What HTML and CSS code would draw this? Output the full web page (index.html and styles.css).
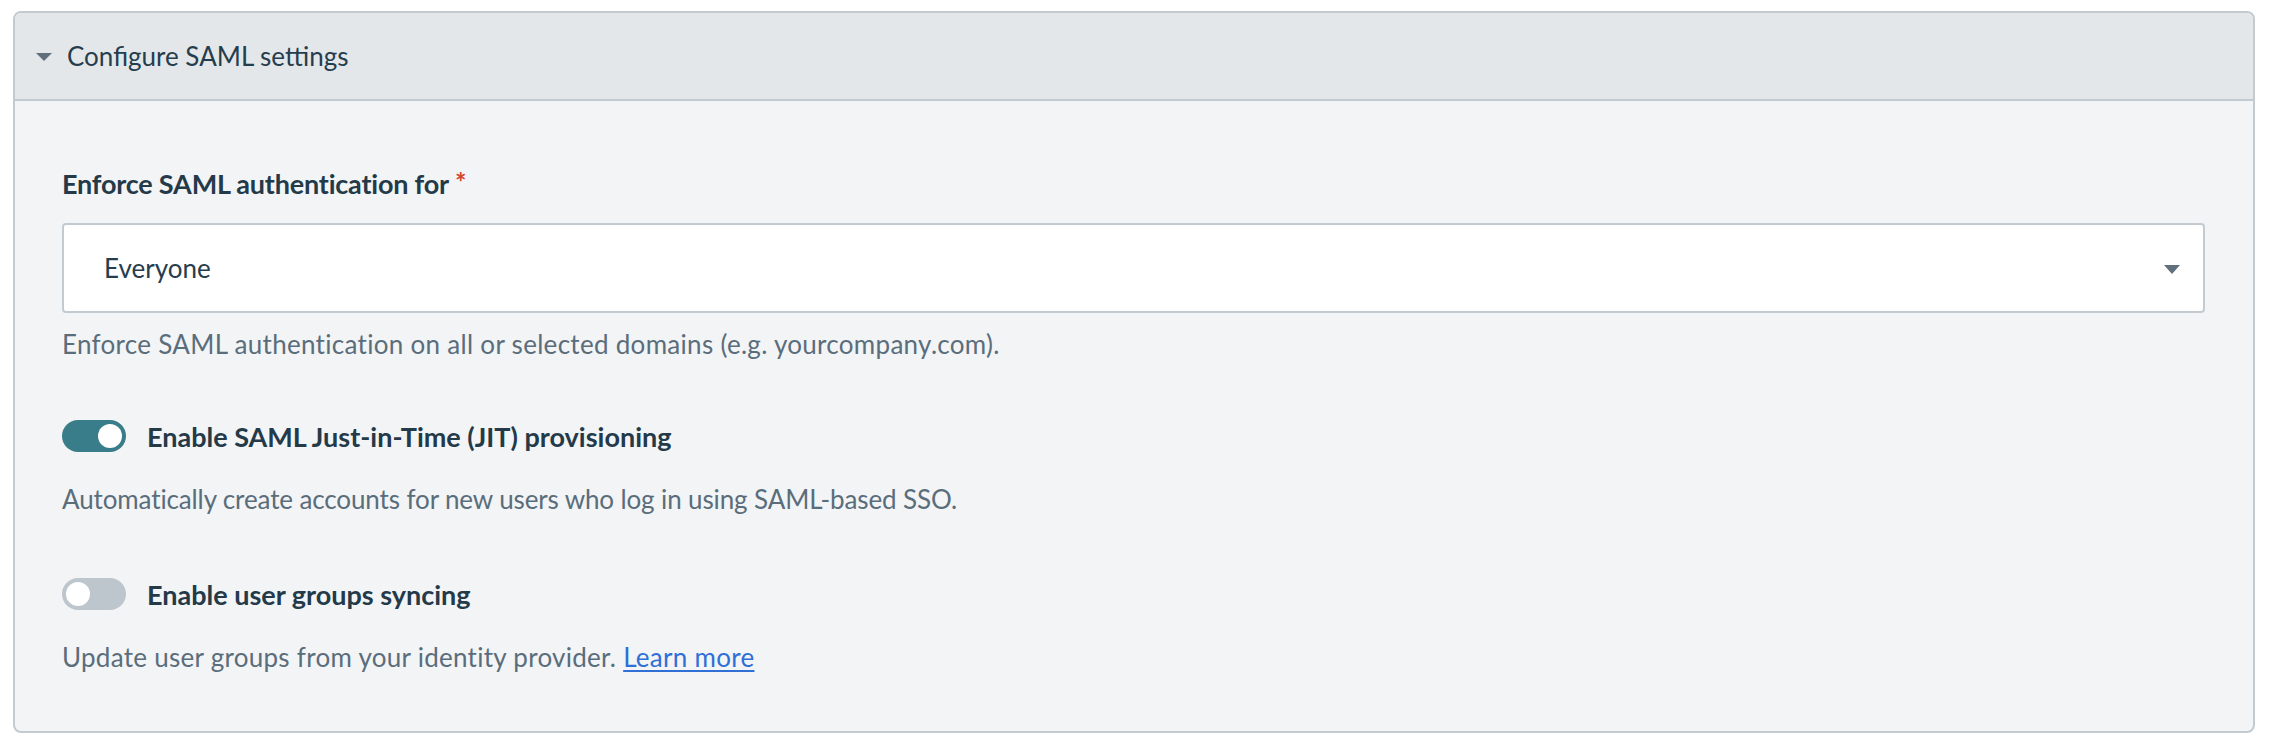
FILE: index.html
```html
<!DOCTYPE html>
<html lang="en">
<head>
<meta charset="utf-8">
<title>Configure SAML settings</title>
<link rel="stylesheet" href="styles.css">
</head>
<body>
<section class="panel">
  <header class="panel-header">
    <svg class="caret" width="16" height="8" viewBox="0 0 16 8" aria-hidden="true"><path d="M0 0 H16 L8 8 Z" fill="#5f6f7b"/></svg>
    <span class="panel-title">Configure SAML settings</span>
  </header>
  <div class="panel-body">
    <div class="group">
      <div class="field-label">Enforce SAML authentication for<span class="req">*</span></div>
      <div class="select">
        <span class="select-value">Everyone</span>
        <svg class="select-arrow" width="16" height="9" viewBox="0 0 16 9" aria-hidden="true"><path d="M0 0 H16 L8 9 Z" fill="#5f6f7b"/></svg>
      </div>
      <p class="help help-domains">Enforce SAML authentication on all or selected domains (e.g. yourcompany.com).</p>
    </div>
    <div class="group group-toggle">
      <div class="toggle-row">
        <span class="toggle on"><span class="knob"></span></span>
        <span class="toggle-label">Enable SAML Just-in-Time (JIT) provisioning</span>
      </div>
      <p class="help help-after-toggle help-jit">Automatically create accounts for new users who log in using SAML-based SSO.</p>
    </div>
    <div class="group group-toggle group-last">
      <div class="toggle-row">
        <span class="toggle off"><span class="knob"></span></span>
        <span class="toggle-label">Enable user groups syncing</span>
      </div>
      <p class="help help-after-toggle help-groups">Update user groups from your identity provider. <a class="link" href="#">Learn more</a></p>
    </div>
  </div>
</section>
</body>
</html>
```
FILE: styles.css
```css
* { box-sizing: border-box; }

body {
  margin: 0;
  background: #ffffff;
  font-family: Lato, "Liberation Sans", sans-serif;
  color: #263d4d;
}

.panel {
  margin: 11px 0 0 13px;
  width: 2242px;
  border: 2px solid #c3cad0;
  border-radius: 8px;
  overflow: hidden;
  background: #f3f4f6;
}

.panel-header {
  height: 88px;
  display: flex;
  align-items: center;
  padding-left: 21px;
  background: #e4e7ea;
  border-bottom: 2px solid #c3cad0;
}

.caret {
  display: block;
  margin-right: 15px;
  margin-top: 2px;
}

.panel-title {
  font-size: 26px;
  line-height: 32px;
  color: #263d4d;
}

.panel-body {
  padding: 65px 48px 58px 47px;
}

.field-label {
  font-size: 27px;
  font-weight: 700;
  line-height: 32px;
  letter-spacing: -0.2px;
  color: #243a49;
}

.req {
  color: #d4452c;
  font-size: 27px;
  font-weight: 700;
  margin-left: 6px;
  vertical-align: 2px;
}

.select {
  margin-top: 23px;
  height: 90px;
  background: #ffffff;
  border: 2px solid #c3cad0;
  border-radius: 4px;
  display: flex;
  align-items: center;
  justify-content: space-between;
  padding: 0 23px 0 40px;
}

.select-value {
  font-size: 26px;
  color: #263d4d;
}

.select-arrow {
  display: block;
  margin-top: 2px;
}

.help {
  margin: 15px 0 0;
  font-size: 26px;
  line-height: 32px;
  color: #5a6d7b;
}

.help-domains {
  letter-spacing: 0.3px;
}

.help-jit {
  letter-spacing: -0.12px;
}

.help-groups {
  letter-spacing: 0.28px;
}

.help-after-toggle {
  margin-top: 31px;
}

.group-toggle {
  margin-top: 60px;
}

.group-last {
  margin-top: 63px;
}

.toggle-row {
  display: flex;
  align-items: center;
  height: 32px;
}

.toggle {
  width: 64px;
  height: 32px;
  border-radius: 16px;
  display: flex;
  align-items: center;
  padding: 0 4px;
  flex: none;
}

.toggle.on {
  background: #3a7d8a;
  justify-content: flex-end;
}

.toggle.off {
  background: #bec6cd;
  justify-content: flex-start;
}

.knob {
  width: 24px;
  height: 24px;
  border-radius: 50%;
  background: #ffffff;
}

.toggle-label {
  margin-left: 21px;
  font-size: 27px;
  font-weight: 700;
  color: #243a49;
}

.link {
  color: #2f6fd6;
  text-decoration: underline;
  text-underline-offset: 3px;
}
```
